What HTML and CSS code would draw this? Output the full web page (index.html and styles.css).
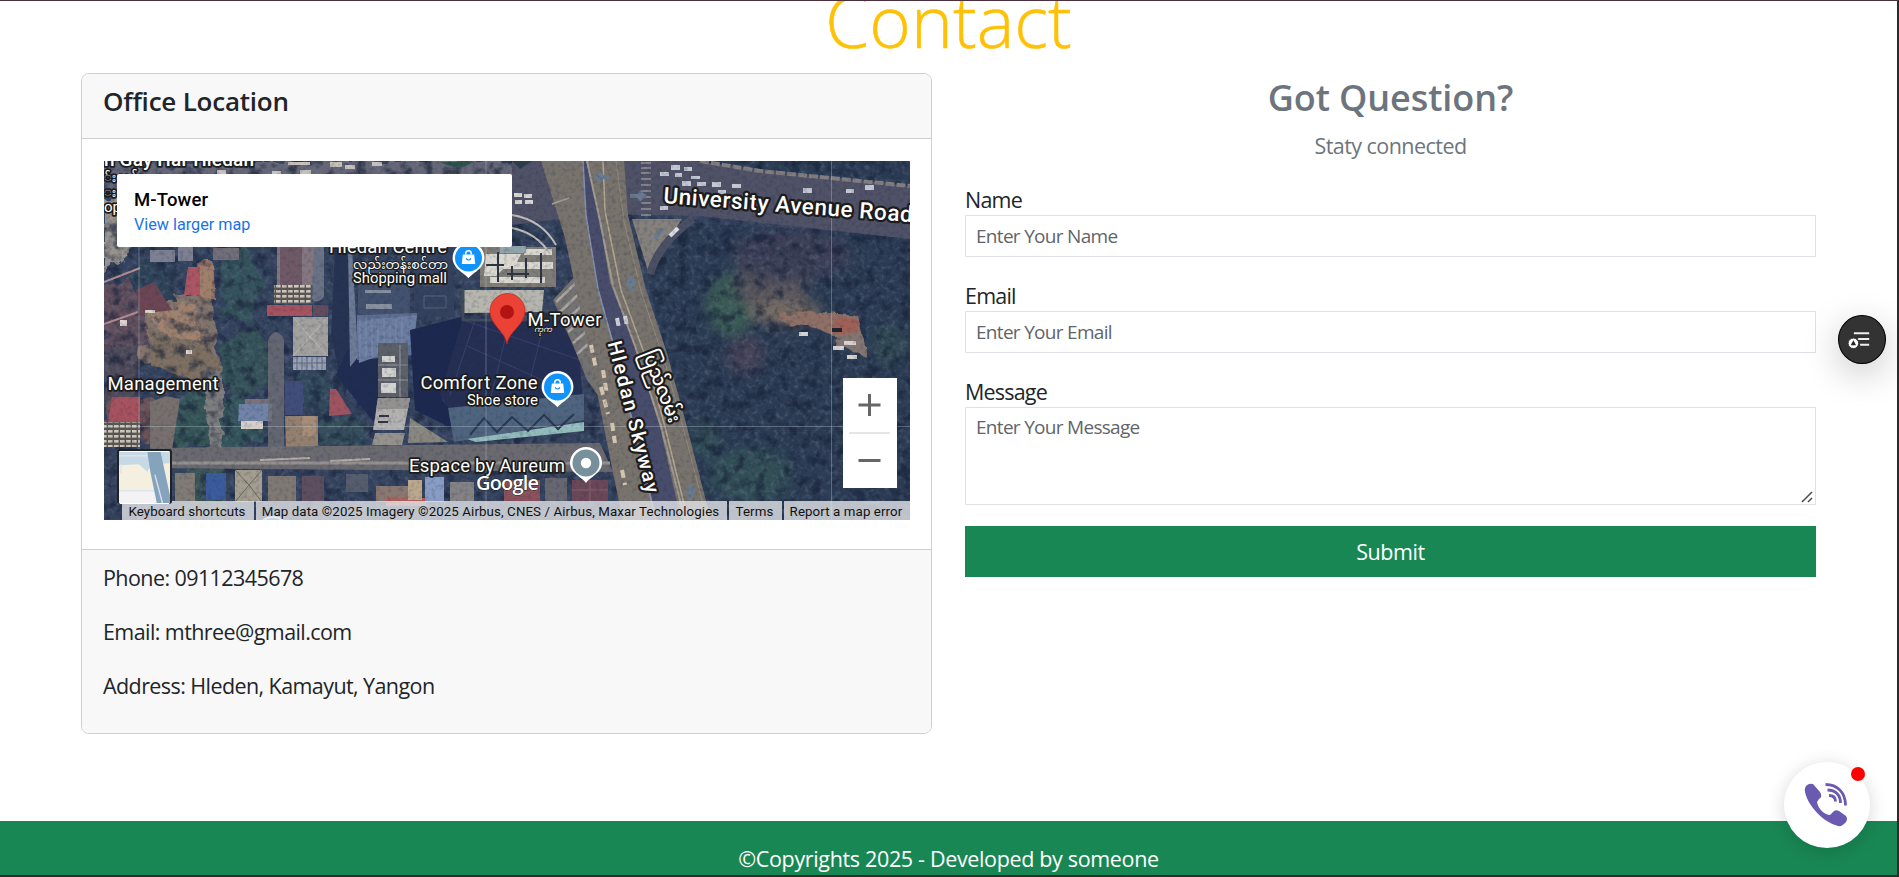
FILE: index.html
```html
<!DOCTYPE html>
<html lang="en">
<head>
<meta charset="utf-8">
<title>Contact</title>
<link rel="stylesheet" href="styles.css">
</head>
<body>
<main class="page">
  <h1 class="title"><span>Contact</span></h1>
  <div class="row">
    <section class="card">
      <header class="card-head"><h2>Office Location</h2></header>
      <div class="card-body">
        <div class="map">
          <svg class="sat" viewBox="104 161 806 359" preserveAspectRatio="none">
            <defs>
              <filter id="rough" x="0" y="0" width="100%" height="100%" color-interpolation-filters="sRGB">
                <feTurbulence type="fractalNoise" baseFrequency="0.2" numOctaves="4" seed="7"/>
                <feColorMatrix values="0 0 0 0 .42  0 0 0 0 .49  0 0 0 0 .58  3 0 0 0 -1.4"/>
              </filter>
              <filter id="dark" x="0" y="0" width="100%" height="100%" color-interpolation-filters="sRGB">
                <feTurbulence type="fractalNoise" baseFrequency="0.09" numOctaves="5" seed="21"/>
                <feColorMatrix values="0 0 0 0 .08  0 0 0 0 .12  0 0 0 0 .21  0 3.2 0 0 -1.5"/>
              </filter>
              <filter id="fine" x="0" y="0" width="100%" height="100%" color-interpolation-filters="sRGB">
                <feTurbulence type="fractalNoise" baseFrequency="0.25" numOctaves="3" seed="11"/>
                <feColorMatrix values="0 0 0 0 .12  0 0 0 0 .15  0 0 0 0 .24  0 3 0 0 -1.4"/>
              </filter>
              <filter id="soft" x="-20%" y="-20%" width="140%" height="140%"><feGaussianBlur stdDeviation="6"/></filter>
              <filter id="edge" x="-5%" y="-5%" width="110%" height="110%">
                <feTurbulence type="fractalNoise" baseFrequency="0.07" numOctaves="3" seed="3"/>
                <feDisplacementMap in="SourceGraphic" scale="12"/>
              </filter>
              <pattern id="slats" width="6" height="5" patternUnits="userSpaceOnUse"><rect width="6" height="5" fill="#5a5652"/><rect width="4.6" height="2.6" fill="#cfc8bd"/></pattern>
              <g id="shop"><path d="M0 19C-4 14-15 10-15 0A15 15 0 1 1 15 0C15 10 4 14 0 19Z" transform="scale(1.06)" fill="#fff"/><circle r="13.500" fill="#1093fb"/><path d="M-5.700-3.500h11.400l1 9.500h-13.400z" fill="#fff"/><path d="M-2.800-3.500v-1a2.800 2.800 0 0 1 5.600 0v1" fill="none" stroke="#fff" stroke-width="1.500"/><path d="M-2.500.5q2.500 3 5 0" fill="none" stroke="#1093fb" stroke-width="1.200"/></g>
            </defs>
            <rect x="104" y="161" width="806" height="359" fill="#35435e"/>
            <!-- western yards -->
            <g filter="url(#edge)">
              <path d="M104 161H560V192H104z" fill="#666778"/>
              <path d="M104 200L140 190 146 240 104 275z" fill="#9c968f"/>
              <path d="M104 330L150 300 210 290 222 380 190 372 104 350z" fill="#86746a"/>
              <path d="M145 312L195 300 200 355 175 350z" fill="#a3836d"/>
              <path d="M196 262L213 262 216 300 198 295z" fill="#a57d67"/>
              <path d="M150 330L215 345 218 390 150 365z" fill="#80705f"/>
              <path d="M104 290L140 270 148 345 104 365z" fill="#62505d"/>
              <path d="M104 345L140 345 135 400 104 400z" fill="#4f4858"/>
              <path d="M104 400H172V425L148 442 104 444z" fill="#6d5154"/>
              <path d="M205 370H222V450H205z" fill="#807e7e"/>
              <path d="M125 270L165 250 176 300 140 300z" fill="#2f4358"/>
              <path d="M222 262L245 245 265 285 248 320 222 318z" fill="#36535c"/>
              <path d="M222 345L255 325 270 350 268 390 235 400 219 372z" fill="#365359"/>
              <path d="M175 400L205 390 210 447 172 447z" fill="#365656"/>
              <path d="M222 400L240 390 268 440 222 448z" fill="#36545b"/>
              <path d="M298 375L330 372 330 412 298 412z" fill="#324a5b"/>
              <path d="M320 418L365 420 368 445 320 448z" fill="#36505b"/>
              <path d="M186 468L225 466 225 518 190 518z" fill="#3a5457"/>
            </g>
            <!-- park -->
            <path d="M640 220L910 235V520H710L650 290z" fill="#2b3c54"/>
            <path d="M700 161H910V180L760 172z" fill="#2b3c54"/>
            <g filter="url(#soft)">
              <ellipse cx="731" cy="305" rx="25" ry="32" fill="#3a5c54"/><ellipse cx="772" cy="285" rx="36" ry="28" fill="#56525a"/>
              <ellipse cx="785" cy="312" rx="36" ry="14" fill="#756a61"/><ellipse cx="750" cy="475" rx="42" ry="28" fill="#304f57"/><ellipse cx="890" cy="345" rx="16" ry="20" fill="#314c53"/>
              <ellipse cx="790" cy="255" rx="60" ry="25" fill="#3c4056"/><ellipse cx="745" cy="355" rx="20" ry="20" fill="#444357"/><ellipse cx="705" cy="440" rx="14" ry="18" fill="#304d55"/>
            </g>
            <rect x="104" y="161" width="806" height="359" filter="url(#rough)" opacity=".34"/>
            <rect x="104" y="161" width="806" height="359" filter="url(#dark)" opacity=".62"/>
            <g filter="url(#edge)"><path d="M780 313l30-2 48 5 5 22-30-1-25-12-26-2z" fill="#8f7066"/><path d="M833 318l26 1-1 13-26-1z" fill="#9f6059"/><path d="M838 334l25 0 4 24-31-12z" fill="#837672"/></g>
            <path d="M832 328h10v4h-10z" fill="#20242e"/><path d="M799 332h9v4h-9zM833 346h11v4h-11zM844 341h12v4h-12zM847 355h10v4h-10z" fill="#d6d4d2"/>
            <!-- lots west of the tower -->
            <path d="M188 267h12v28h-16z" fill="#ab5662"/><path d="M200 267h11v28h-11z" fill="#a0806a"/>
            <path d="M150 250h25v12h-25zM178 247h15v14h-15z" fill="#7c8092"/><path d="M213 248h26v12h-26z" fill="#726f7a"/>
            <path d="M112 397h28v26h-32z" fill="#a7525f"/><path d="M104 422h36v25h-36z" fill="url(#slats)"/>
            <path d="M136 290l18-8 18 28-32 4z" fill="#6c4654"/><path d="M104 282l36-14M104 324l34-12" stroke="#b58c90" stroke-width="2"/>
            <path d="M145 310h10v3h-10zM186 350h6v4h-6zM120 320h7v6h-7z" fill="#ddd5ce"/>
            <path d="M277 247h37v38h-37z" fill="#85777f"/><path d="M280 247h22v38h-22z" fill="#6f5967"/><path d="M314 247h10v50q-8 8-12 2z" fill="#6a7386"/>
            <path d="M274 285h38v19h-38z" fill="url(#slats)"/>
            <path d="M267 305h45v11h-45z" fill="#a5535e"/><path d="M313 305h15v11h-15z" fill="#634d5c"/>
            <path d="M293 317h35v39h-35z" fill="#a3a19f"/><path d="M293 317l17 20 18-20M310 337l-17 19M310 337l18 19" stroke="#bbb8b2" fill="none"/>
            <path d="M293 357h33v13h-33z" fill="#9aa2b5"/><path d="M297 357v13M302 357v13M307 357v13M312 357v13M317 357v13M322 357v13M293 363h33" stroke="#5f6880"/>
            <path d="M285 381h18v34h-18z" fill="#414e7b"/><path d="M330 389l6 0 16 25-23 2z" fill="#9f5460"/>
            <path d="M245 399h25v11h-25z" fill="#7a7278"/><path d="M239 404h33v17h-34z" fill="#7183a8"/><path d="M241 421h22v8h-22z" fill="#d6d0c8"/>
            <path d="M285 416h33v36h-32z" fill="#93806f"/><path d="M302 416h14v20h-14z" fill="#a78d77"/>
            <path d="M150 402l16-6 14 3-8 51h-22z" fill="#77706e"/>
            <!-- tower and neighbours -->
            <path d="M335 247h12l8 110-10 40-14-60z" fill="#263353"/>
            <path d="M350 345h40v40l-14 40-40-50z" fill="#202d52"/>
            <path d="M358 270h52v44h-52z" fill="#43526f"/><path d="M414 247h40v70h-40z" fill="#34425f"/>
            <path d="M357 315l60-2-5 42-55 5z" fill="#5c6e91"/>
            <path d="M357 321l60-6-3 28-55 20z" fill="#6b7da1"/><path d="M360 318v42M366 318v40M372 318v38M378 318v36M384 318v34M390 318v32M396 318v30M402 318v28" stroke="#8490ab" stroke-width=".8"/>
            <path d="M348 247l4 0 6 110-8 10z" fill="#6c7b96"/>
            <path d="M365 290h26v3h-26zM366 304h26v5h-26z" fill="#8890a0"/><path d="M424 296h22v12h-22zM424 275h18v10h-18z" fill="none" stroke="#57657f"/>
            <path d="M378 343h30v54h-30z" fill="#5c6068"/><path d="M382 356h13v6h-13zM382 368h14v9h-14zM381 383h15v10h-15z" fill="#d2d2d0"/><path d="M400 345v52M378 365h30M378 380h30" stroke="#9498a4"/>
            <path d="M378 398h32l-6 32h-31z" fill="#b2b1b0"/><path d="M378 398h32l-2 11h-32z" fill="#949291"/><path d="M379 416h10M378 422h10" stroke="#303541" stroke-width="2"/>
            <path d="M410 418l38 24-40 1z" fill="#8a8780"/><path d="M375 433h30l-3 12h-30z" fill="#96938f"/>
            <path d="M410 330L465 316 442 400 480 442 415 410z" fill="#1c284f"/>
            <path d="M463 318L560 320 580 360 583 410 450 410 440 395z" fill="#252f53"/>
            <path d="M463 320l117 40M465 345l110 50M475 320l-25 75M510 320l-20 80M545 320l-20 80" stroke="#36426a" fill="none"/>
            <path d="M448 408l136-14 0 26-130 22z" fill="#4f657f"/><path d="M467 439l117-17v9l-108 11z" fill="#93bdbd"/>
            <path d="M470 435l14-17 13 14 15-15 16 14 16-16 14 14 16-15" fill="none" stroke="#293954" stroke-width="2"/>
            <path d="M462 290h82l-2 22-78 1z" fill="#b6b6ae"/><path d="M458 290h5v30h80" fill="none" stroke="#414b5b" stroke-width="3"/>
            <path d="M480 247h76v40h-76z" fill="#7f7d77"/><path d="M486 254h35l-4 8h36v7h-50l-7 7h-12zM524 249h28v6h-28zM490 277h55v6h-55z" fill="#dad8cf"/><path d="M500 246h26v7h-26z" fill="#93a5ac"/>
            <g stroke="#2d3442" stroke-width="2"><path d="M498 252v30M512 266v14M526 258v20M541 253v30M486 265h18M507 274h22"/></g>
            <!-- lower street and roofs -->
            <path d="M150 448L600 443 613 472 150 468z" fill="#6b6a70"/><path d="M155 463h455" stroke="#959190" stroke-width="3"/><path d="M260 460l50-2M330 461l40-2" stroke="#b5aea6" stroke-width="2"/>
            <path d="M268 340q8-16 16 0v112h-16z" fill="#717178" opacity=".8"/>
            <path d="M175 473h20v28h-20z" fill="#807b75"/><path d="M206 473h20v27h-20z" fill="#3a5b9c"/>
            <path d="M235 470h27v32h-27z" fill="#a39e8f"/><path d="M235 470l14 15 13-15M249 485l-14 17M249 485l13 17" stroke="#6a6862" fill="none"/>
            <path d="M268 476h28v25h-28z" fill="#7f7974"/><path d="M302 476h22v25h-22z" fill="#5e4f5f"/><path d="M346 474h22v18h-22z" fill="#565d6c"/>
            <path d="M376 486h32v16h-32z" fill="#897872"/><path d="M386 498h40v8h-40z" fill="#af605a"/><path d="M408 480h14v20h-14z" fill="#bba88d"/><path d="M425 477h19v25h-19z" fill="#889cc4"/>
            <path d="M450 482h24v19h-24z" fill="#838284"/><path d="M504 480h36v21h-36z" fill="#8b515d"/><path d="M545 478h22v23h-22z" fill="#676772"/><path d="M572 480h36v21h-36z" fill="#6b4858"/><path d="M590 480v21M572 490h36" stroke="#85606c"/>
            <!-- avenue -->
            <path d="M512 161H690L910 186V239L700 216 600 214 512 225z" fill="#505267"/>
            <path d="M700 161l60 10 150 15" stroke="#817e80" stroke-width="4" fill="none" stroke-dasharray="9 2"/>
            <path d="M660 206h8v4h-8zM684 167h8v4h-8zM671 165h9v5h-9zM660 172h9v4h-9zM675 173h7v4h-7zM682 181h9v5h-9zM691 176h9v3h-9zM697 182h9v4h-9zM712 182h9v5h-9zM732 184h9v4h-9zM718 190h8v4h-8zM803 188h9v5h-9zM846 189h8v4h-8zM865 185h9v5h-9z" fill="#c4c8d2"/>
            <path d="M330 162h12v5h-12zM345 165h10v4h-10zM372 162h10v4h-10zM217 170h9v4h-9zM300 170h11v4h-11zM272 171h9v4h-9zM288 162h22v3h-22z" fill="#c8c2bc"/>
            <path d="M440 162q20 10 32 0z" fill="#2e544e"/><path d="M512 161h20l-12 8z" fill="#2c3e48"/>
            <path d="M641 163h10M641 168h10M641 173h10M641 179h10M641 185h10M641 191h10M641 197h10M641 203h10M641 209h10M641 215h10" stroke="#83818a" stroke-width="2"/>
            <path d="M632 219h50l-34 52z" fill="#85817d"/><path d="M650 274q8-30 43-55" stroke="#4c5064" stroke-width="8" fill="none"/><path d="M670 236l8-8" stroke="#dcdde0" stroke-width="4"/>
            <path d="M512 215q30 5 44 30M512 228q25 5 38 26" stroke="#bfbdb8" stroke-width="2" fill="none"/><path d="M514 193h8v4h-8zM524 194h8v4h-8zM515 200h7v4h-7zM525 200h8v4h-8z" fill="#d8d6d0"/>
            <path d="M553 300l28-30 20 130-14-20-12-30z" fill="#757372"/>
            <path d="M556 302l24-23M560 312l24-23M564 322l24-22M568 332l24-21M573 343l21-18M577 354l18-16" stroke="#aaa7a0" stroke-width="2.500"/>
            <!-- skyway -->
            <path d="M541 161H624L628 215 646 290 667 353 687 427 711 520H623L613 473 600 407 583 323 565 238z" fill="#78736d"/>
            <path d="M583 161L586 215 597 287 613 340 633 420 657 520H681L660 427 633 340 610 283 597 205 586 161z" fill="#484d6c"/>
            <path d="M587 161l12 55 14 70 22 60 26 80 24 94" stroke="#a09a90" stroke-width="2" fill="none"/>
            <path d="M603 161l2 50 16 79 25 68 18 65 24 97" stroke="#b2a58d" stroke-width="1.500" fill="none"/>
            <path d="M583 161l3 54 12 74 14 51 20 80 24 100" stroke="#858fae" stroke-width="1.500" fill="none"/>
            <path d="M616 161l8 60 17 70 25 75 22 80 19 74" stroke="#928878" stroke-width="1" fill="none"/>
            <path d="M552 204l17-6" stroke="#a5a19a" stroke-width="1.500"/>
            <g stroke="#d5c5af" stroke-width="4" stroke-dasharray="8 5"><path d="M591 345l5 23M603 370l4 25M601 387l7 27M612 423l3 20M622 470l3 15"/><path d="M617 318l2 10M625 316l2 10" stroke="#d3d6df"/></g>
            <path d="M609 177h-12m5-4l-5 4 5 4M630 196h14m-5-4l5 4-5 4M632 292l-1-12m-4 5l4-6 4 5M690 500l1-12m-5 5l5-6 3 6M662 229l-7 10" stroke="#687b91" stroke-width="4" fill="none"/>
            <rect x="104" y="161" width="806" height="359" filter="url(#fine)" opacity=".2"/>
            <path d="M139 161v359M486 161v359M831.500 161v359M104 426.500h806" stroke="#c4ccd8" stroke-opacity=".35"/>
            <!-- place labels -->
            <g class="lbl">
              <text x="104" y="166" textLength="150" font-size="19" font-weight="500">n Gay Har Hledan</text>
              <text x="104" y="212" font-size="15">oppi</text><text x="104" y="182" font-size="13">်းတန်း</text><text x="104" y="197" font-size="13">းလတ်</text>
              <text x="329" y="253" textLength="118" font-size="18.500">Hledan Centre</text>
              <text class="thin" x="353" y="269" textLength="95" font-size="13" lengthAdjust="spacingAndGlyphs">လည်းတန်းစင်တာ</text>
              <text x="353" y="283" textLength="94" font-size="15">Shopping mall</text>
              <text class="thin" x="534" y="332" font-size="8" font-style="italic">ကုက</text>
              <text x="527.500" y="326" textLength="74" font-size="18.500">M-Tower</text>
              <text x="420.500" y="389" textLength="117" font-size="18.500">Comfort Zone</text>
              <text x="467" y="404.500" textLength="71" font-size="15">Shoe store</text>
              <text x="107.500" y="390" textLength="111" font-size="18.500">Management</text>
              <text x="409" y="472" textLength="156" font-size="18.500">Espace by Aureum</text>
              <text class="road" transform="translate(663 203) rotate(4.400)" textLength="250" font-size="22.500">University Avenue Road</text>
              <text class="road" transform="translate(607.500 343) rotate(75.500)" textLength="156" font-size="20">Hledan Skyway</text>
              <text class="road" transform="translate(642 353) rotate(69)" textLength="76" lengthAdjust="spacingAndGlyphs" font-size="19">ပြည်လမ်း</text>
              <text class="brand" x="476" y="490" textLength="63" font-size="20">Google</text>
            </g>
            <use href="#shop" x="468.500" y="258"/><use href="#shop" x="557.500" y="387"/>
            <path d="M586 483C582 477 570 473 570 463A16 16 0 1 1 602 463C602 473 590 477 586 483Z" fill="#fff"/><circle cx="586" cy="463" r="13.500" fill="#78909c"/><circle cx="586" cy="463" r="5.200" fill="#fff"/>
            <path d="M507 344C505 331 490 325 490 311A17.500 17.500 0 1 1 525 311C525 325 509 331 507 344Z" fill="#ea4335" stroke="#c5221f" stroke-width=".7"/><circle cx="507" cy="312" r="7" fill="#b31412"/>
            <circle cx="273" cy="533" r="16" fill="#1093fb" stroke="#fff" stroke-width="2"/>
          </svg>
          <div class="place"><strong>M-Tower</strong><a>View larger map</a></div>
          <div class="zoomer"><svg viewBox="0 0 54 110"><path d="M15.500 27h22M26.500 16v22M15.500 82.500h22" stroke="#666" stroke-width="3"/><path d="M6 55h41" stroke="#e6e6e6" stroke-width="2"/></svg></div>
          <div class="attrib"><span class="keys">Keyboard shortcuts</span><span class="data">Map data ©2025 Imagery ©2025 Airbus, CNES / Airbus, Maxar Technologies</span><span class="terms">Terms</span><span class="report">Report a map error</span></div>
          <svg class="mini" viewBox="0 0 54 54"><path d="M0 0h54v54H0z" fill="#f5efe0"/><path d="M0 41h54v13H0z" fill="#f3f3f6"/><path d="M0 0h54v12l-20 1-4 8-9-8-21 1z" fill="#c8d9e6"/><path d="M0 4h29L31 0M2 13v10M0 41h40" stroke="#dce5ee" stroke-width="1.500" fill="none"/><path d="M30 0h14l10 46v8H40L33 20z" fill="#85a3bd"/><path d="M38 24l8 30" stroke="#d4dfe9" stroke-width="1.500"/></svg>
        </div>
      </div>
      <footer class="card-foot"><p>Phone: 09112345678</p><p>Email: mthree@gmail.com</p><p>Address: Hleden, Kamayut, Yangon</p></footer>
    </section>
    <form class="ask">
      <h2>Got Question?</h2>
      <p class="sub">Staty connected</p>
      <label for="n">Name</label>
      <input id="n" type="text" placeholder="Enter Your Name">
      <label for="e">Email</label>
      <input id="e" type="text" placeholder="Enter Your Email">
      <label for="m">Message</label>
      <div class="area">
        <textarea id="m" placeholder="Enter Your Message"></textarea>
        <svg class="grip" viewBox="0 0 12 12"><path d="M1 11L11 1M7 11l4-4" stroke="#4a4a4a" stroke-width="1.500"/></svg>
      </div>
      <button type="button">Submit</button>
    </form>
  </div>
  <footer class="bottom"><span>©Copyrights 2025 - Developed by someone</span></footer>
</main>
<div class="fab"><svg viewBox="0 0 48 48"><path d="M15.500 18h16M20 24h11.500M22 30h9.500" stroke="#eee" stroke-width="2"/><circle cx="15" cy="28.500" r="5.500" fill="#fff" stroke="#333" stroke-width="1"/><path d="M15 25.200l2.800 5.200h-5.600z" fill="#222"/></svg></div>
<div class="call"><svg viewBox="0 0 86 86"><path d="M22 24Q25 21 29 22L36 30Q39 35 35 37L33 40C34 47 41 53 46 53L49 50Q51 47 55 49L62 54Q64 57 62 60Q58 65 54 64C39 60 24 44 21 30Q20 27 22 24Z" fill="#6b5bb0"/><g fill="none" stroke="#6b5bb0" stroke-width="2.800"><path d="M41.500 22.500c12 0 20 8 20 21"/><path d="M43.500 28c8 0 13 5 13 13"/><path d="M45 33.500c4 0 6.500 2 6.500 6"/></g></svg><i class="dot"></i></div>
</body>
</html>
```
FILE: styles.css
```css
* { box-sizing: border-box; }
body { margin: 0; background: #fff; color: #212529; font-family: "Open Sans", "Noto Sans", sans-serif; width: 1899px; height: 877px; overflow: hidden; position: relative; border: solid #2b2b2b; border-width: 1px 2px 2px 0; border-top-color: #4a2f3c; }
h1, h2, p { margin: 0; }
.page { height: 874px; display: flex; flex-direction: column; }
.title { height: 72px; overflow: hidden; display: flex; justify-content: center; font-weight: 300; font-size: 71px; line-height: 96px; color: #ffc107; }
.title span { margin-top: -28px; -webkit-text-stroke: .5px #ffc107; }
.row { display: grid; grid-template-columns: 851px 851px; column-gap: 33px; justify-content: center; height: 748px; align-items: start; }
.card { border: 1px solid #cfcfcf; border-radius: 8px; overflow: hidden; height: 661px; display: flex; flex-direction: column; }
.card-head { height: 65px; background: #f8f8f8; border-bottom: 1px solid #cfcfcf; padding: 7px 21px; }
.card-head h2 { font-size: 26px; font-weight: 600; line-height: 40px; letter-spacing: -.22px; }
.card-body { height: 410px; padding: 22px; }
.map { position: relative; width: 806px; height: 359px; overflow: hidden; font-family: Roboto, sans-serif; }
.sat { display: block; width: 806px; height: 359px; }
.lbl text { font-family: Roboto, "Noto Sans Myanmar", sans-serif; fill: #fff; stroke: #1c1c1c; stroke-width: 3.5px; stroke-linejoin: round; paint-order: stroke; }
.lbl .thin { stroke-width: 2px; }
.lbl .road { font-weight: 500; stroke-width: 4.5px; }
.lbl .brand { font-family: "Open Sans", sans-serif; font-weight: 600; stroke-width: 1px; }
.place { position: absolute; left: 13px; top: 13px; width: 395px; height: 73px; background: #fff; border-radius: 2px; padding: 14px 17px; display: flex; flex-direction: column; }
.place strong { font-weight: 500; font-size: 18.5px; line-height: 25px; letter-spacing: .15px; color: #000; }
.place a { font-size: 16.2px; line-height: 24px; color: #1a73e8; }
.zoomer { position: absolute; left: 739px; top: 217px; width: 54px; height: 110px; background: #fff; }
.zoomer svg { display: block; }
.mini { position: absolute; left: 13px; top: 288px; width: 55px; height: 55px; border: 2px solid #222; border-bottom: 0; border-radius: 3px; background: #fff; }
.attrib { position: absolute; left: 18px; right: 0; top: 340px; height: 19px; display: flex; gap: 2px; font-size: 13.3px; line-height: 22px; letter-spacing: .1px; color: #111; white-space: nowrap; }
.attrib span { background: rgba(228, 229, 233, .8); height: 19px; text-align: center; padding-right: 2px; }
.keys { width: 132px; }
.data { width: 471px; }
.terms { width: 53px; }
.report { flex: 1; }
.card-foot { flex: 1; background: #f8f8f8; border-top: 1px solid #cfcfcf; padding: 11px 21px; font-size: 21.5px; line-height: 34px; display: flex; flex-direction: column; gap: 20px; letter-spacing: -.58px; }
.ask { display: flex; flex-direction: column; }
.ask h2 { text-align: center; color: #6c757d; font-weight: 600; font-size: 36px; line-height: 44px; padding-top: 3px; letter-spacing: -.1px; }
.sub { text-align: center; color: #6c757d; font-size: 21.5px; line-height: 32px; margin: 10px 0 22px; letter-spacing: -.55px; }
.ask label { font-size: 21.5px; line-height: 32px; height: 31px; letter-spacing: -.8px; }
.ask input, .ask textarea { display: block; width: 100%; border: 1px solid #dee2e6; padding: 0 10px; font: 19px "Open Sans", sans-serif; letter-spacing: -.7px; margin: 0 0 23px; height: 42px; border-radius: 0; }
.area { position: relative; margin-bottom: 21px; }
.ask textarea { height: 98px; padding-top: 6px; margin: 0; resize: none; }
.grip { position: absolute; right: 3px; bottom: 2px; width: 12px; height: 12px; }
.ask input::placeholder, .ask textarea::placeholder { color: #5f656b; }
.ask button { height: 51px; background: #198754; border: 0; color: #fff; font: 21.5px "Open Sans", sans-serif; letter-spacing: -.45px; }
.bottom { flex: 1; background: #198754; color: #fff; text-align: center; font-size: 21.5px; line-height: 32px; padding-top: 22px; letter-spacing: -.34px; }
.fab { position: absolute; left: 1838px; top: 314px; width: 48px; height: 49px; border-radius: 50%; background: #333; border: 1px solid #000; box-shadow: 0 10px 36px rgba(0, 0, 0, .22); }
.fab svg, .call svg { display: block; }
.call { position: absolute; left: 1784px; top: 761px; width: 86px; height: 86px; border-radius: 50%; background: #fff; box-shadow: 0 3px 18px rgba(0, 0, 0, .16); }
.dot { position: absolute; left: 67px; top: 5px; width: 14px; height: 14px; border-radius: 50%; background: #f00; }
```
